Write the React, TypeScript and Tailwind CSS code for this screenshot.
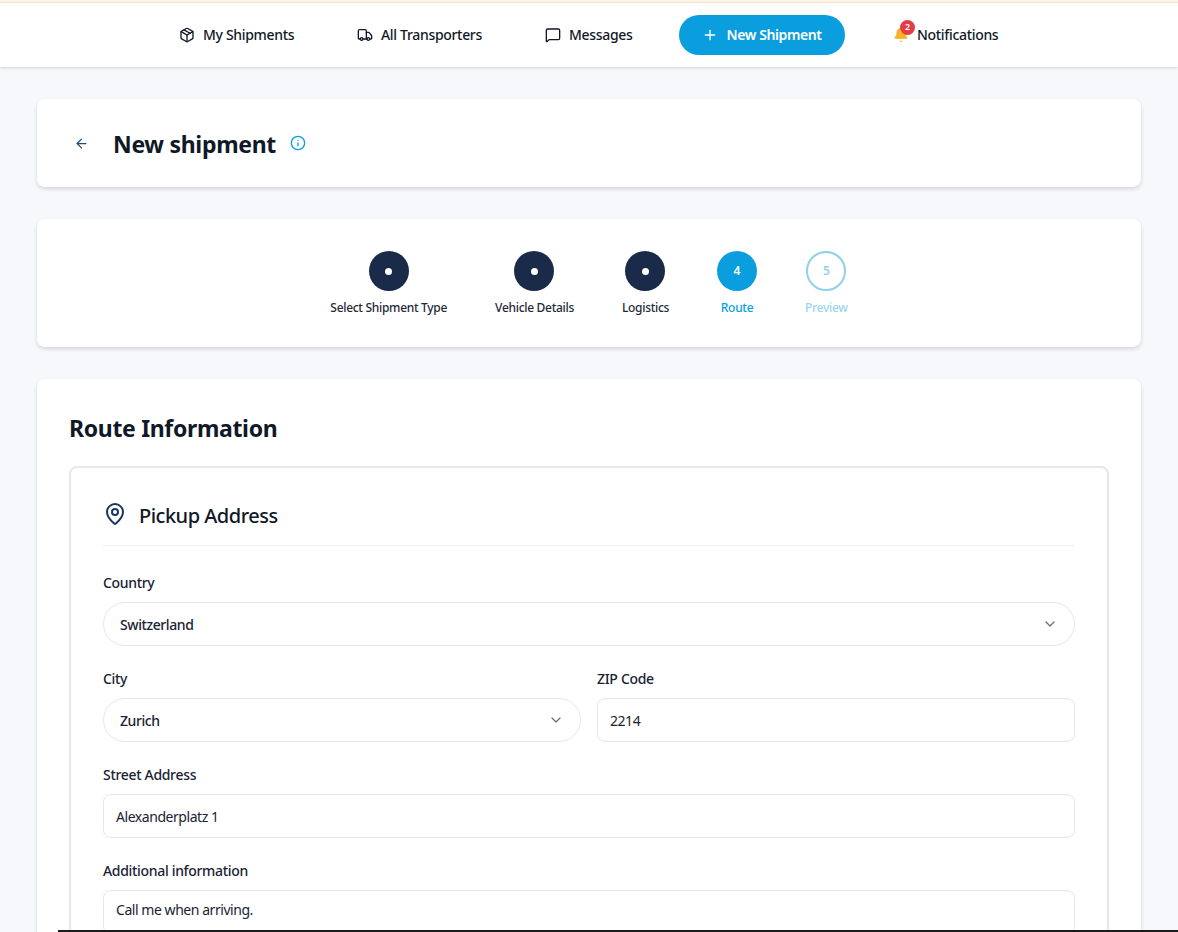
import { ArrowLeft, Bell, ChevronDown, Info, MapPin, MessageSquare, Package, Plus, Truck } from "lucide-react";

const nav = [
  { label: "My Shipments", icon: Package, width: "w-[178px]" },
  { label: "All Transporters", icon: Truck, width: "w-[188px]" },
  { label: "Messages", icon: MessageSquare, width: "w-[134px]" },
];

const steps = [
  { label: "Select Shipment Type", state: "done" },
  { label: "Vehicle Details", state: "done" },
  { label: "Logistics", state: "done" },
  { label: "Route", state: "active", n: 4 },
  { label: "Preview", state: "todo", n: 5 },
];

function Label({ children }: { children: React.ReactNode }) {
  return <div className="mb-[9px] h-5 text-[14px] leading-5 font-medium tracking-[-0.32px] text-[#1a2233]">{children}</div>;
}

function SelectBox({ value }: { value: string }) {
  return (
    <div className="flex h-11 items-center justify-between rounded-full border border-[#e5e7eb] bg-white pr-4 pl-4 text-[14px] font-medium tracking-[-0.42px] text-[#1a2233]">
      {value}
      <ChevronDown size={16} strokeWidth={2} className="text-[#6b7280]" />
    </div>
  );
}

function TextBox({ value, top }: { value: string; top?: boolean }) {
  return (
    <div
      className={`flex h-11 rounded-lg border border-[#e5e7eb] bg-white px-3 text-[14px] tracking-[-0.45px] text-[#1a2233] ${
        top ? "items-start pt-2" : "items-center"
      }`}
    >
      {value}
    </div>
  );
}

export default function App() {
  return (
    <div className="relative h-[932px] w-[1178px] overflow-hidden bg-[#f6f8fb] font-['Noto_Sans',sans-serif]">
      <header className="h-[67px] border-t-2 border-[#fdf5ec] bg-white shadow-[0_1px_3px_rgba(0,0,0,0.14)]">
        <div className="flex h-[65px] items-center border-t border-[#f9e2cc] pl-[179px]">
          {nav.map((item) => (
            <div key={item.label} className={`flex items-center gap-2 ${item.width} text-[14px] font-medium tracking-[-0.32px] text-[#111827]`}>
              <item.icon size={16} strokeWidth={2} />
              <span className="mb-[2px]">{item.label}</span>
            </div>
          ))}
          <div className="flex h-10 w-[166px] items-center justify-center gap-2 rounded-full bg-[#0b9ede] text-[14px] font-semibold tracking-[-0.4px] text-white">
            <Plus size={16} strokeWidth={2} />
            <span className="mb-[2px]">New Shipment</span>
          </div>
          <div className="relative ml-[48px] flex items-center text-[14px] font-medium tracking-[-0.32px] text-[#111827]">
            <Bell size={16} fill="#f5b32a" strokeWidth={1.5} className="text-[#f5b32a]" />
            <span className="absolute top-[-4px] left-[7px] flex h-[15px] w-[15px] items-center justify-center rounded-full bg-[#e23c45] text-[9px] font-semibold tracking-normal text-white">
              2
            </span>
            <span className="mb-[2px] ml-2">Notifications</span>
          </div>
        </div>
      </header>

      <main className="flex flex-col gap-8 px-[37px] pt-8">
        <section className="flex h-[88px] items-center rounded-lg bg-white pl-[37px] shadow-[0_2px_4px_rgba(0,0,0,0.14)]">
          <ArrowLeft size={15} strokeWidth={2} className="text-[#1f4e79]" />
          <h1 className="mt-[2px] ml-[24px] text-[23px] leading-8 font-bold tracking-[-0.3px] text-[#111827]">New shipment</h1>
          <Info size={16} strokeWidth={2} className="mb-[1px] ml-[14px] text-[#0b9ede]" />
        </section>

        <section className="flex h-[128px] items-start justify-center gap-12 rounded-lg bg-white pt-8 shadow-[0_2px_4px_rgba(0,0,0,0.14)]">
          {steps.map((s) => (
            <div key={s.label} className="flex flex-col items-center gap-[9px]">
              {s.state === "done" && (
                <div className="flex size-10 items-center justify-center rounded-full bg-[#1a2b4a]">
                  <div className="size-[7px] rounded-full bg-white" />
                </div>
              )}
              {s.state === "active" && (
                <div className="flex size-10 items-center justify-center rounded-full bg-[#0b9ede] text-[12px] font-semibold text-white">
                  {s.n}
                </div>
              )}
              {s.state === "todo" && (
                <div className="flex size-10 items-center justify-center rounded-full border-2 border-[#8fd0ea] text-[12px] font-semibold text-[#8fd0ea]">
                  {s.n}
                </div>
              )}
              <span
                className={`text-[12px] leading-4 font-medium tracking-[-0.3px] ${
                  s.state === "done" ? "text-[#1f2937]" : s.state === "active" ? "text-[#0b9ede]" : "text-[#9bd6ee]"
                }`}
              >
                {s.label}
              </span>
            </div>
          ))}
        </section>

        <section className="rounded-t-lg bg-white px-8 pt-8 shadow-[0_2px_4px_rgba(0,0,0,0.14)]">
          <h2 className="mt-[-1px] mb-[1px] text-[23px] leading-9 font-bold tracking-[-0.33px] text-[#111827]">Route Information</h2>
          <div className="mt-[20px] rounded-lg border-2 border-[#e5e7eb] bg-white px-8 pt-8">
            <div className="flex h-[46px] items-start gap-3 border-b border-[#eef0f3] pt-[2px]">
              <MapPin size={24} strokeWidth={2} className="text-[#17365d]" />
              <h3 className="text-[20px] leading-7 font-medium tracking-[-0.5px] text-[#111827]">Pickup Address</h3>
            </div>
            <div className="mt-[27px] flex flex-col gap-[23px]">
              <div>
                <Label>Country</Label>
                <SelectBox value="Switzerland" />
              </div>
              <div className="grid grid-cols-2 gap-4">
                <div>
                  <Label>City</Label>
                  <SelectBox value="Zurich" />
                </div>
                <div>
                  <Label>ZIP Code</Label>
                  <TextBox value="2214" />
                </div>
              </div>
              <div>
                <Label>Street Address</Label>
                <TextBox value="Alexanderplatz 1" />
              </div>
              <div>
                <Label>Additional information</Label>
                <TextBox value="Call me when arriving." top />
              </div>
            </div>
          </div>
        </section>
      </main>

      {/* black strip along the bottom edge of the capture */}
      <div className="absolute right-0 bottom-0 left-[58px] h-[2px] bg-[#1a1a1a]" />
    </div>
  );
}
